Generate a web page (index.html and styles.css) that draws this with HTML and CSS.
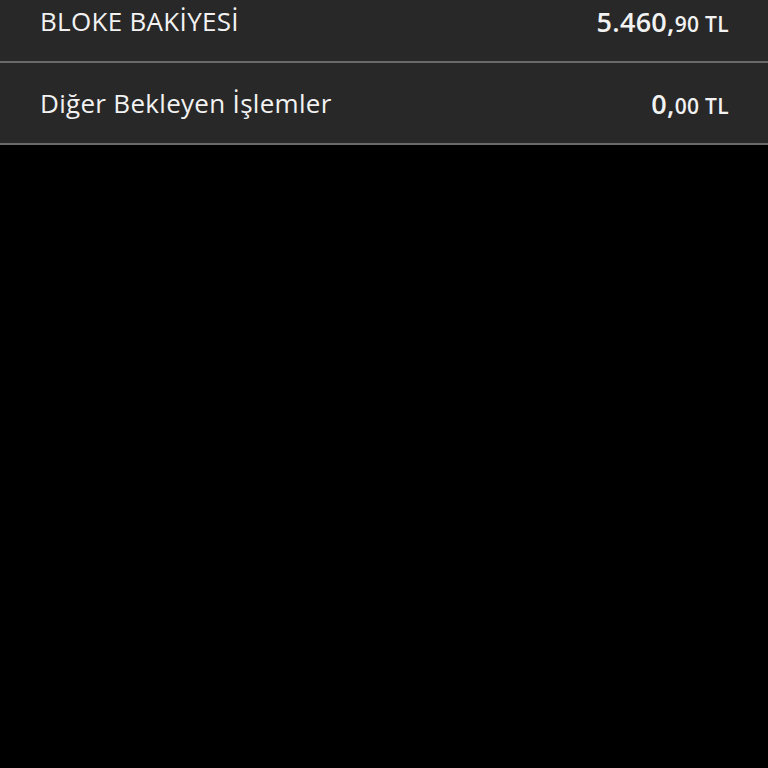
FILE: index.html
```html
<html>
<head>
<title>Bakiye</title>
<link rel="stylesheet" href="styles.css">
</head>
<body>
<div class="list">
  <div class="row">
    <span class="label">BLOKE BAKİYESİ</span>
    <span class="amount">5.460,<small>90 TL</small></span>
  </div>
  <div class="row">
    <span class="label">Diğer Bekleyen İşlemler</span>
    <span class="amount">0,<small>00 TL</small></span>
  </div>
</div>
</body>
</html>
```
FILE: styles.css
```css
body {
  margin: 0;
  background-color: #000000;
  font-family: "Open Sans", "Noto Sans", sans-serif;
  color: #f2f2f2;
}

.list {
  margin-top: -19px;
}

.row {
  display: flex;
  align-items: center;
  justify-content: space-between;
  height: 80px;
  padding: 0 39px 0 40px;
  background-color: #282828;
  border-bottom: 2px solid #6a6a6a;
}

.label {
  font-size: 26px;
  letter-spacing: 0.3px;
}

.amount {
  font-size: 27px;
  font-weight: 600;
  letter-spacing: 0.3px;
}

.amount small {
  font-size: 21px;
}
```
